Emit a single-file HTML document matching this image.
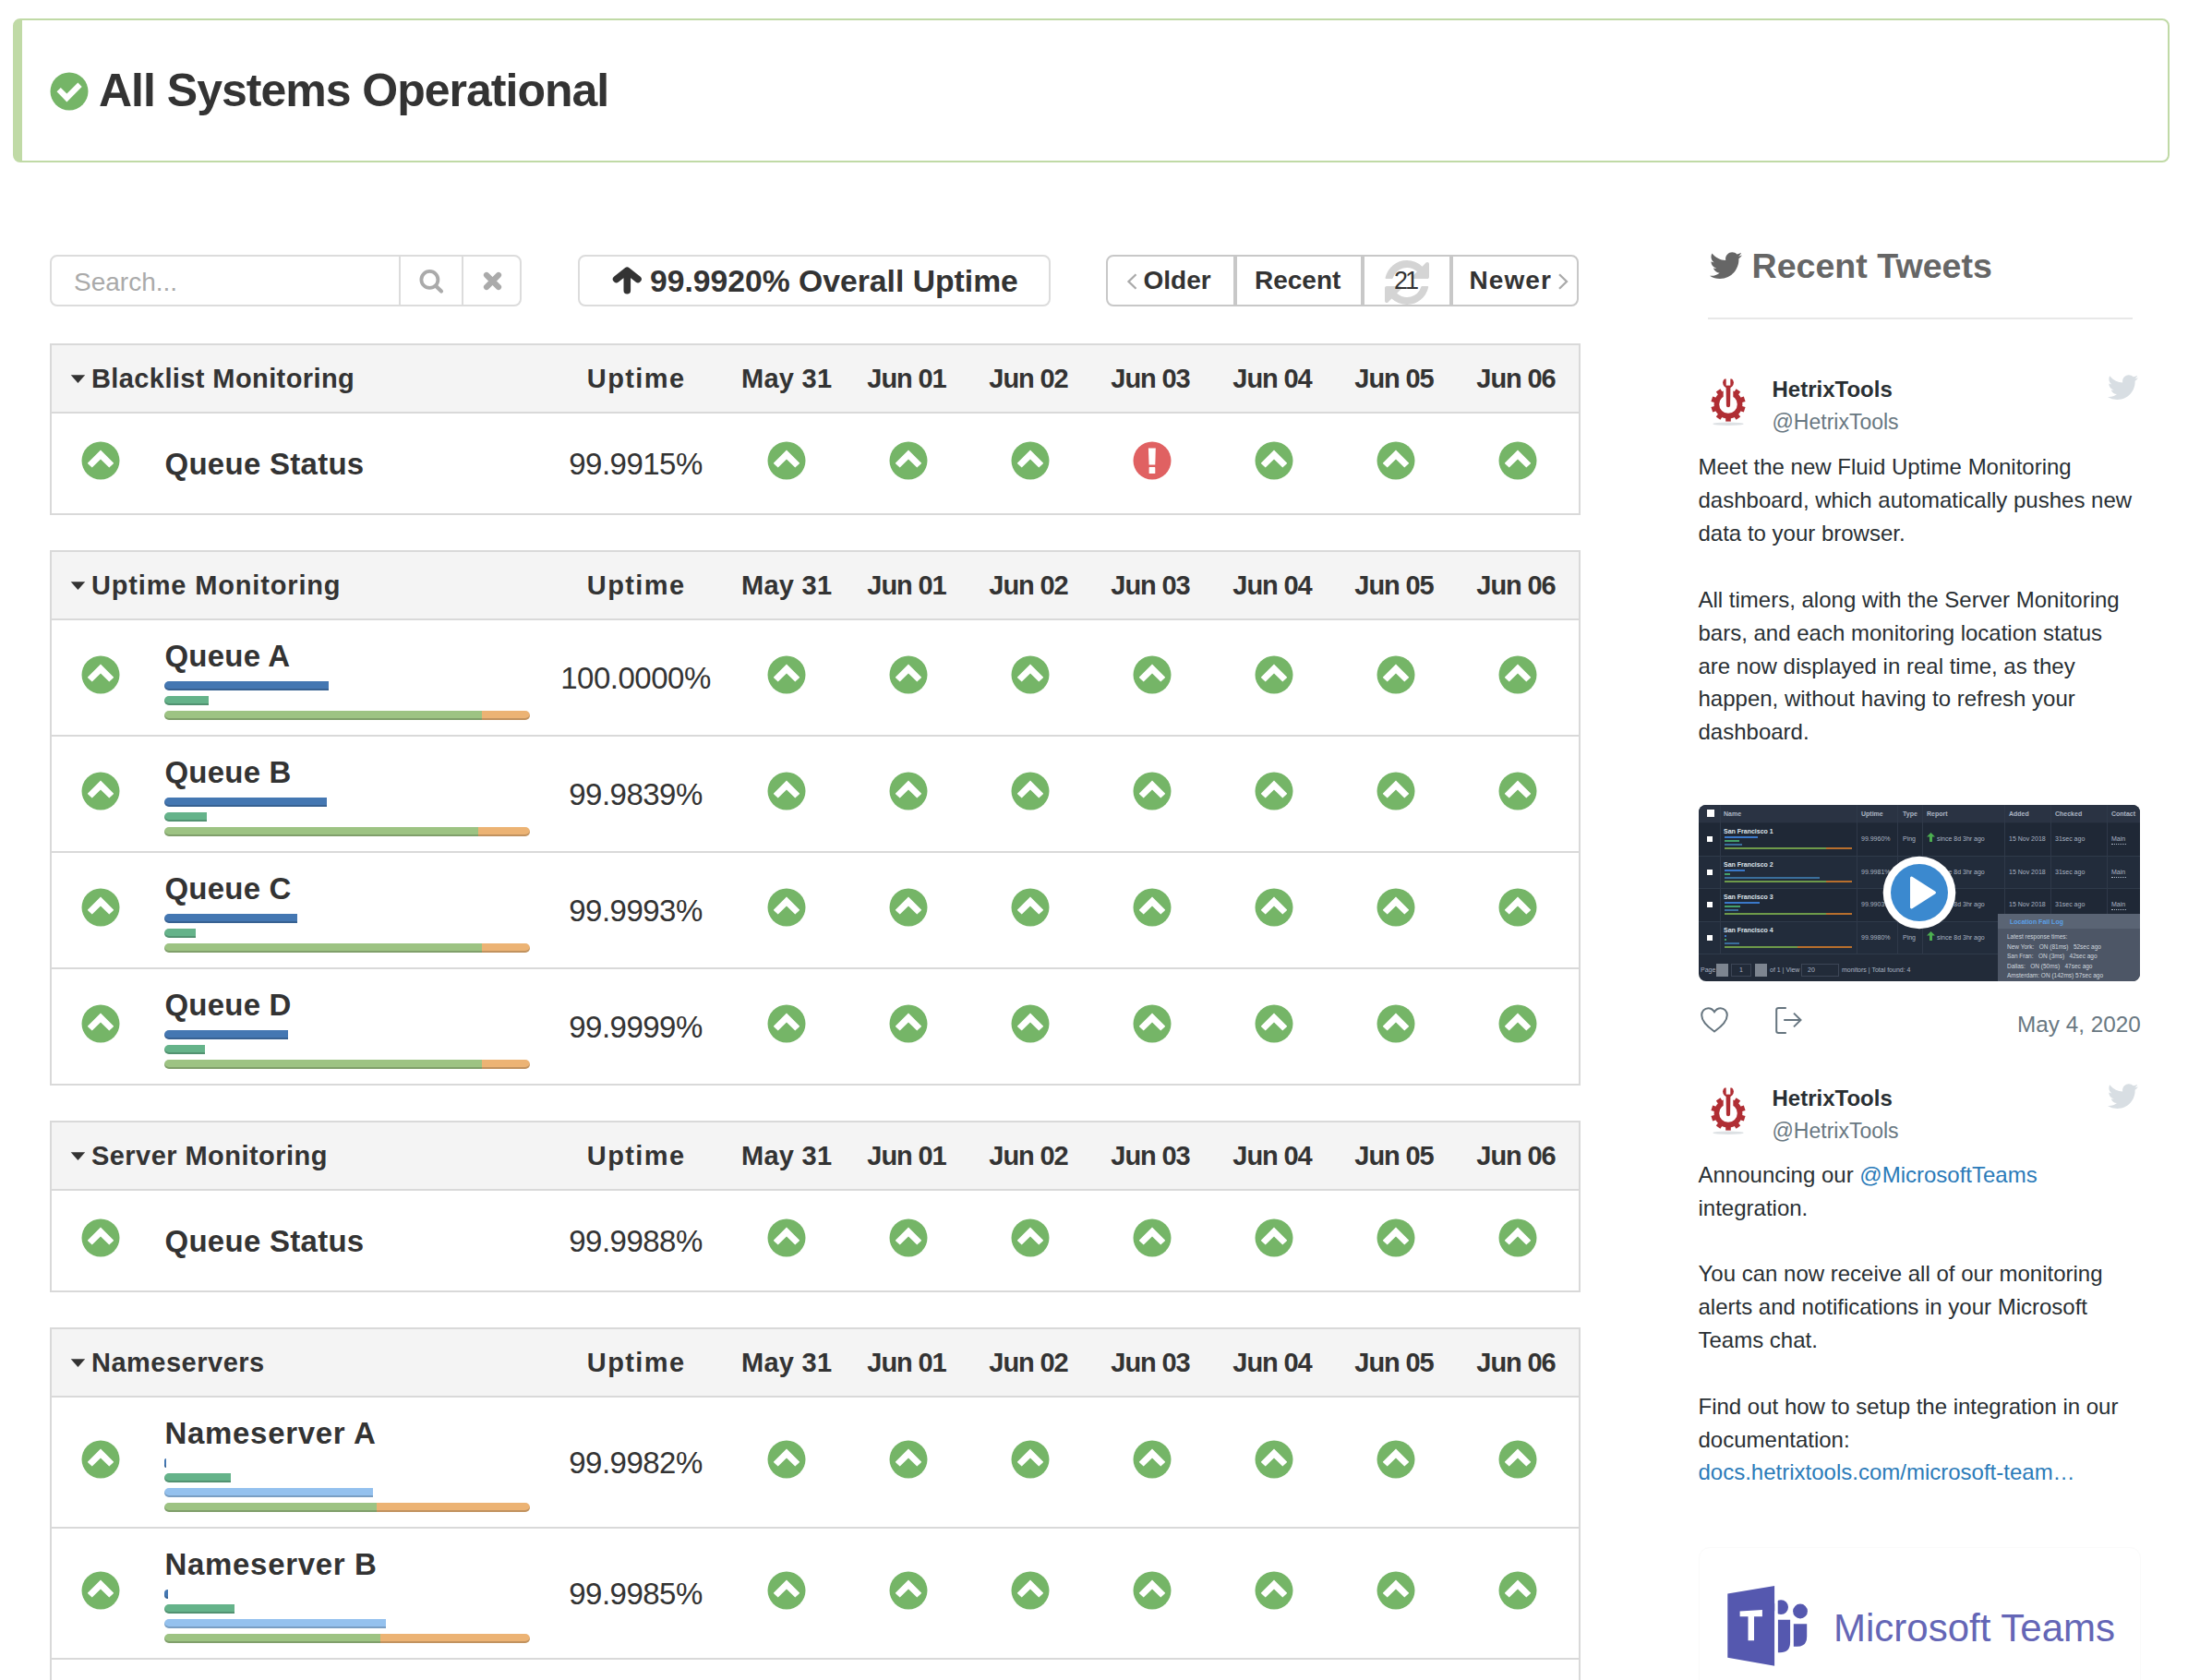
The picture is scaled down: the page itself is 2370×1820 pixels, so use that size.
<!DOCTYPE html><html><head><meta charset="utf-8"><title>Status</title><style>
html,body{margin:0;padding:0;background:#fff;}
body{width:2370px;height:1820px;position:relative;overflow:hidden;font-family:"Liberation Sans", sans-serif;}
.t{position:absolute;white-space:nowrap;}
.bar{position:absolute;height:10px;border-radius:5px 0 0 5px;box-shadow:inset 0 -2px 0 rgba(0,0,0,.18);}
</style></head><body>
<div style="position:absolute;left:14px;top:20px;width:2324px;height:152px;border:2px solid #c0daa6;border-left:10px solid #c0daa6;border-radius:8px;background:#fff;"></div>
<svg style="position:absolute;left:54px;top:78px" width="42" height="42" viewBox="-21 -21 42 42"><circle r="20.5" fill="#75b567"/><path d="M-13.5 0.2 L-9.2 -4 L-2.6 2.6 L9.4 -9.4 L13.7 -5.1 L-2.6 11.6 Z" fill="#fff"/></svg>
<div class="t" style="left:107.0px;top:73.2px;font-size:50px;line-height:50px;font-weight:700;color:#333;letter-spacing:-1px;">All Systems Operational</div>
<div style="position:absolute;left:54px;top:276px;width:507px;height:52px;border:2px solid #dcdcdc;border-radius:8px;background:#fff;"></div>
<div style="position:absolute;left:432px;top:278px;width:2px;height:52px;background:#dcdcdc;"></div>
<div style="position:absolute;left:500px;top:278px;width:2px;height:52px;background:#dcdcdc;"></div>
<div class="t" style="left:80.0px;top:292.3px;font-size:28px;line-height:28px;font-weight:400;color:#aaa;letter-spacing:0px;">Search...</div>
<svg style="position:absolute;left:450px;top:288px" width="34" height="34" viewBox="0 0 34 34"><circle cx="15.4" cy="14.9" r="9" fill="none" stroke="#aaa" stroke-width="3.8"/><line x1="22" y1="21.8" x2="28" y2="27.5" stroke="#aaa" stroke-width="4.2" stroke-linecap="round"/></svg>
<svg style="position:absolute;left:520px;top:291px" width="28" height="28" viewBox="0 0 28 28"><path d="M7 7 L20 20 M20 7 L7 20" stroke="#aaa" stroke-width="6.2" stroke-linecap="round"/></svg>
<div style="position:absolute;left:626px;top:276px;width:508px;height:52px;border:2px solid #dcdcdc;border-radius:8px;background:#fff;"></div>
<svg style="position:absolute;left:660px;top:286px" width="40" height="36" viewBox="0 0 40 36"><path d="M19.3 28.8 L19.3 9 M7.6 16.5 L19.3 7.2 L31 16.5" fill="none" stroke="#333" stroke-width="7.6" stroke-linecap="round" stroke-linejoin="round"/></svg>
<div class="t" style="left:704.0px;top:287.8px;font-size:33.7px;line-height:33.7px;font-weight:700;color:#333;letter-spacing:0px;">99.9920% Overall Uptime</div>
<div style="position:absolute;left:1198px;top:276px;width:508px;height:52px;border:2px solid #c8c8c8;border-radius:8px;background:#fff;"></div>
<div style="position:absolute;left:1336px;top:278px;width:4px;height:52px;background:#c8c8c8;"></div>
<div style="position:absolute;left:1474px;top:278px;width:4px;height:52px;background:#c8c8c8;"></div>
<div style="position:absolute;left:1570px;top:278px;width:4px;height:52px;background:#c8c8c8;"></div>
<svg style="position:absolute;left:1218px;top:294px" width="16" height="22" viewBox="0 0 16 22"><path d="M12.5 3.2 L4.5 11 L12.5 18.8" fill="none" stroke="#aaa" stroke-width="2.3"/></svg>
<div class="t" style="left:1238.5px;top:290.1px;font-size:28px;line-height:28px;font-weight:700;color:#333;letter-spacing:0px;">Older</div>
<div class="t" style="left:1359.0px;top:290.1px;font-size:28px;line-height:28px;font-weight:700;color:#333;letter-spacing:0px;">Recent</div>
<svg style="position:absolute;left:1500px;top:282px" width="48" height="48" viewBox="128 128 1536 1536"><path d="M1639 1056q0 5-1 7-64 268-268 434.5t-478 166.5q-146 0-282.5-55t-243.5-157l-129 129q-19 19-45 19t-45-19-19-45v-448q0-26 19-45t45-19h448q26 0 45 19t19 45-19 45l-137 137q71 66 161 102t187 36q134 0 250-65t186-179q11-17 53-117 8-23 30-23h192q13 0 22.5 9.5t9.5 22.5zm25-800v448q0 26-19 45t-45 19h-448q-26 0-45-19t-19-45 19-45l138-138q-148-137-349-137-134 0-250 65t-186 179q-11 17-53 117-8 23-30 23h-199q-13 0-22.5-9.5t-9.5-22.5v-7q65-268 270-434.5t480-166.5q146 0 284 55.5t245 156.5l130-129q19-19 45-19t45 19 19 45z" fill="#d4d4d4"/></svg>
<div class="t" style="left:1510.0px;top:290.9px;font-size:27px;line-height:27px;font-weight:400;color:#333;letter-spacing:-3px;">21</div>
<div class="t" style="left:1591.5px;top:290.1px;font-size:28px;line-height:28px;font-weight:700;color:#333;letter-spacing:1.1px;">Newer</div>
<svg style="position:absolute;left:1684px;top:294px" width="16" height="22" viewBox="0 0 16 22"><path d="M5 3.2 L13 11 L5 18.8" fill="none" stroke="#aaa" stroke-width="2.3"/></svg>
<div style="position:absolute;left:54px;top:372px;width:1654px;height:182px;border:2px solid #d9d9d9;background:#fff;"></div>
<div style="position:absolute;left:56px;top:374px;width:1654px;height:72px;background:#f4f4f4;"></div>
<div style="position:absolute;left:56px;top:446px;width:1654px;height:2px;background:#d9d9d9;"></div>
<svg style="position:absolute;left:76px;top:406px" width="17" height="10" viewBox="0 0 17 10"><path d="M0.7 0.2 L16.2 0.2 L8.45 9 Z" fill="#333"/></svg>
<div class="t" style="left:99.0px;top:395.5px;font-size:29px;line-height:29px;font-weight:700;color:#333;letter-spacing:0.4px;">Blacklist Monitoring</div>
<div class="t" style="left:539.2px;width:300px;text-align:center;top:395.5px;font-size:29px;line-height:29px;font-weight:700;color:#333;letter-spacing:1.4px;">Uptime</div>
<div class="t" style="left:702.2px;width:300px;text-align:center;top:395.5px;font-size:29px;line-height:29px;font-weight:700;color:#333;letter-spacing:0.28px;">May 31</div>
<div class="t" style="left:832.0px;width:300px;text-align:center;top:395.5px;font-size:29px;line-height:29px;font-weight:700;color:#333;letter-spacing:-1.1px;">Jun 01</div>
<div class="t" style="left:964.0px;width:300px;text-align:center;top:395.5px;font-size:29px;line-height:29px;font-weight:700;color:#333;letter-spacing:-1.1px;">Jun 02</div>
<div class="t" style="left:1096.0px;width:300px;text-align:center;top:395.5px;font-size:29px;line-height:29px;font-weight:700;color:#333;letter-spacing:-1.1px;">Jun 03</div>
<div class="t" style="left:1228.0px;width:300px;text-align:center;top:395.5px;font-size:29px;line-height:29px;font-weight:700;color:#333;letter-spacing:-1.1px;">Jun 04</div>
<div class="t" style="left:1360.0px;width:300px;text-align:center;top:395.5px;font-size:29px;line-height:29px;font-weight:700;color:#333;letter-spacing:-1.1px;">Jun 05</div>
<div class="t" style="left:1492.0px;width:300px;text-align:center;top:395.5px;font-size:29px;line-height:29px;font-weight:700;color:#333;letter-spacing:-1.1px;">Jun 06</div>
<svg style="position:absolute;left:88.40px;top:477.70px" width="42" height="42" viewBox="-21 -21 42 42"><circle r="20.5" fill="#75b567"/><path d="M0 -11.5 L14 2.6 Q14.2 2.9 13.9 3.2 L9.6 7.3 Q9.3 7.5 9 7.3 L0 -1.6 L-9 7.3 Q-9.3 7.5 -9.6 7.3 L-13.9 3.2 Q-14.2 2.9 -14 2.6 Z" fill="#fff"/></svg>
<div class="t" style="left:178.5px;top:485.8px;font-size:33px;line-height:33px;font-weight:700;color:#333;letter-spacing:0.27px;">Queue Status</div>
<div class="t" style="left:538.5px;width:300px;text-align:center;top:485.8px;font-size:33px;line-height:33px;font-weight:400;color:#333;letter-spacing:-0.5px;">99.9915%</div>
<svg style="position:absolute;left:831.25px;top:477.70px" width="42" height="42" viewBox="-21 -21 42 42"><circle r="20.5" fill="#75b567"/><path d="M0 -11.5 L14 2.6 Q14.2 2.9 13.9 3.2 L9.6 7.3 Q9.3 7.5 9 7.3 L0 -1.6 L-9 7.3 Q-9.3 7.5 -9.6 7.3 L-13.9 3.2 Q-14.2 2.9 -14 2.6 Z" fill="#fff"/></svg>
<svg style="position:absolute;left:963.25px;top:477.70px" width="42" height="42" viewBox="-21 -21 42 42"><circle r="20.5" fill="#75b567"/><path d="M0 -11.5 L14 2.6 Q14.2 2.9 13.9 3.2 L9.6 7.3 Q9.3 7.5 9 7.3 L0 -1.6 L-9 7.3 Q-9.3 7.5 -9.6 7.3 L-13.9 3.2 Q-14.2 2.9 -14 2.6 Z" fill="#fff"/></svg>
<svg style="position:absolute;left:1095.25px;top:477.70px" width="42" height="42" viewBox="-21 -21 42 42"><circle r="20.5" fill="#75b567"/><path d="M0 -11.5 L14 2.6 Q14.2 2.9 13.9 3.2 L9.6 7.3 Q9.3 7.5 9 7.3 L0 -1.6 L-9 7.3 Q-9.3 7.5 -9.6 7.3 L-13.9 3.2 Q-14.2 2.9 -14 2.6 Z" fill="#fff"/></svg>
<svg style="position:absolute;left:1227.25px;top:477.70px" width="42" height="42" viewBox="-21 -21 42 42"><circle r="20.5" fill="#e06162"/><path d="M-4.1 -13.6 L3.8 -13.6 L3.3 4.4 L-3.4 4.4 Z" fill="#fff"/><rect x="-3.4" y="7.1" width="6.7" height="7" rx="0.6" fill="#fff"/></svg>
<svg style="position:absolute;left:1359.25px;top:477.70px" width="42" height="42" viewBox="-21 -21 42 42"><circle r="20.5" fill="#75b567"/><path d="M0 -11.5 L14 2.6 Q14.2 2.9 13.9 3.2 L9.6 7.3 Q9.3 7.5 9 7.3 L0 -1.6 L-9 7.3 Q-9.3 7.5 -9.6 7.3 L-13.9 3.2 Q-14.2 2.9 -14 2.6 Z" fill="#fff"/></svg>
<svg style="position:absolute;left:1491.25px;top:477.70px" width="42" height="42" viewBox="-21 -21 42 42"><circle r="20.5" fill="#75b567"/><path d="M0 -11.5 L14 2.6 Q14.2 2.9 13.9 3.2 L9.6 7.3 Q9.3 7.5 9 7.3 L0 -1.6 L-9 7.3 Q-9.3 7.5 -9.6 7.3 L-13.9 3.2 Q-14.2 2.9 -14 2.6 Z" fill="#fff"/></svg>
<svg style="position:absolute;left:1623.25px;top:477.70px" width="42" height="42" viewBox="-21 -21 42 42"><circle r="20.5" fill="#75b567"/><path d="M0 -11.5 L14 2.6 Q14.2 2.9 13.9 3.2 L9.6 7.3 Q9.3 7.5 9 7.3 L0 -1.6 L-9 7.3 Q-9.3 7.5 -9.6 7.3 L-13.9 3.2 Q-14.2 2.9 -14 2.6 Z" fill="#fff"/></svg>
<div style="position:absolute;left:56px;top:556px;width:1654px;height:2px;background:#d9d9d9;"></div>
<div style="position:absolute;left:54px;top:596px;width:1654px;height:576px;border:2px solid #d9d9d9;background:#fff;"></div>
<div style="position:absolute;left:56px;top:598px;width:1654px;height:72px;background:#f4f4f4;"></div>
<div style="position:absolute;left:56px;top:670px;width:1654px;height:2px;background:#d9d9d9;"></div>
<svg style="position:absolute;left:76px;top:630px" width="17" height="10" viewBox="0 0 17 10"><path d="M0.7 0.2 L16.2 0.2 L8.45 9 Z" fill="#333"/></svg>
<div class="t" style="left:99.0px;top:619.5px;font-size:29px;line-height:29px;font-weight:700;color:#333;letter-spacing:0.84px;">Uptime Monitoring</div>
<div class="t" style="left:539.2px;width:300px;text-align:center;top:619.5px;font-size:29px;line-height:29px;font-weight:700;color:#333;letter-spacing:1.4px;">Uptime</div>
<div class="t" style="left:702.2px;width:300px;text-align:center;top:619.5px;font-size:29px;line-height:29px;font-weight:700;color:#333;letter-spacing:0.28px;">May 31</div>
<div class="t" style="left:832.0px;width:300px;text-align:center;top:619.5px;font-size:29px;line-height:29px;font-weight:700;color:#333;letter-spacing:-1.1px;">Jun 01</div>
<div class="t" style="left:964.0px;width:300px;text-align:center;top:619.5px;font-size:29px;line-height:29px;font-weight:700;color:#333;letter-spacing:-1.1px;">Jun 02</div>
<div class="t" style="left:1096.0px;width:300px;text-align:center;top:619.5px;font-size:29px;line-height:29px;font-weight:700;color:#333;letter-spacing:-1.1px;">Jun 03</div>
<div class="t" style="left:1228.0px;width:300px;text-align:center;top:619.5px;font-size:29px;line-height:29px;font-weight:700;color:#333;letter-spacing:-1.1px;">Jun 04</div>
<div class="t" style="left:1360.0px;width:300px;text-align:center;top:619.5px;font-size:29px;line-height:29px;font-weight:700;color:#333;letter-spacing:-1.1px;">Jun 05</div>
<div class="t" style="left:1492.0px;width:300px;text-align:center;top:619.5px;font-size:29px;line-height:29px;font-weight:700;color:#333;letter-spacing:-1.1px;">Jun 06</div>
<svg style="position:absolute;left:88.40px;top:709.70px" width="42" height="42" viewBox="-21 -21 42 42"><circle r="20.5" fill="#75b567"/><path d="M0 -11.5 L14 2.6 Q14.2 2.9 13.9 3.2 L9.6 7.3 Q9.3 7.5 9 7.3 L0 -1.6 L-9 7.3 Q-9.3 7.5 -9.6 7.3 L-13.9 3.2 Q-14.2 2.9 -14 2.6 Z" fill="#fff"/></svg>
<div class="t" style="left:178.5px;top:693.9px;font-size:33px;line-height:33px;font-weight:700;color:#333;letter-spacing:0.2px;">Queue A</div>
<div class="t" style="left:538.5px;width:300px;text-align:center;top:717.8px;font-size:33px;line-height:33px;font-weight:400;color:#333;letter-spacing:-0.5px;">100.0000%</div>
<svg style="position:absolute;left:831.25px;top:709.70px" width="42" height="42" viewBox="-21 -21 42 42"><circle r="20.5" fill="#75b567"/><path d="M0 -11.5 L14 2.6 Q14.2 2.9 13.9 3.2 L9.6 7.3 Q9.3 7.5 9 7.3 L0 -1.6 L-9 7.3 Q-9.3 7.5 -9.6 7.3 L-13.9 3.2 Q-14.2 2.9 -14 2.6 Z" fill="#fff"/></svg>
<svg style="position:absolute;left:963.25px;top:709.70px" width="42" height="42" viewBox="-21 -21 42 42"><circle r="20.5" fill="#75b567"/><path d="M0 -11.5 L14 2.6 Q14.2 2.9 13.9 3.2 L9.6 7.3 Q9.3 7.5 9 7.3 L0 -1.6 L-9 7.3 Q-9.3 7.5 -9.6 7.3 L-13.9 3.2 Q-14.2 2.9 -14 2.6 Z" fill="#fff"/></svg>
<svg style="position:absolute;left:1095.25px;top:709.70px" width="42" height="42" viewBox="-21 -21 42 42"><circle r="20.5" fill="#75b567"/><path d="M0 -11.5 L14 2.6 Q14.2 2.9 13.9 3.2 L9.6 7.3 Q9.3 7.5 9 7.3 L0 -1.6 L-9 7.3 Q-9.3 7.5 -9.6 7.3 L-13.9 3.2 Q-14.2 2.9 -14 2.6 Z" fill="#fff"/></svg>
<svg style="position:absolute;left:1227.25px;top:709.70px" width="42" height="42" viewBox="-21 -21 42 42"><circle r="20.5" fill="#75b567"/><path d="M0 -11.5 L14 2.6 Q14.2 2.9 13.9 3.2 L9.6 7.3 Q9.3 7.5 9 7.3 L0 -1.6 L-9 7.3 Q-9.3 7.5 -9.6 7.3 L-13.9 3.2 Q-14.2 2.9 -14 2.6 Z" fill="#fff"/></svg>
<svg style="position:absolute;left:1359.25px;top:709.70px" width="42" height="42" viewBox="-21 -21 42 42"><circle r="20.5" fill="#75b567"/><path d="M0 -11.5 L14 2.6 Q14.2 2.9 13.9 3.2 L9.6 7.3 Q9.3 7.5 9 7.3 L0 -1.6 L-9 7.3 Q-9.3 7.5 -9.6 7.3 L-13.9 3.2 Q-14.2 2.9 -14 2.6 Z" fill="#fff"/></svg>
<svg style="position:absolute;left:1491.25px;top:709.70px" width="42" height="42" viewBox="-21 -21 42 42"><circle r="20.5" fill="#75b567"/><path d="M0 -11.5 L14 2.6 Q14.2 2.9 13.9 3.2 L9.6 7.3 Q9.3 7.5 9 7.3 L0 -1.6 L-9 7.3 Q-9.3 7.5 -9.6 7.3 L-13.9 3.2 Q-14.2 2.9 -14 2.6 Z" fill="#fff"/></svg>
<svg style="position:absolute;left:1623.25px;top:709.70px" width="42" height="42" viewBox="-21 -21 42 42"><circle r="20.5" fill="#75b567"/><path d="M0 -11.5 L14 2.6 Q14.2 2.9 13.9 3.2 L9.6 7.3 Q9.3 7.5 9 7.3 L0 -1.6 L-9 7.3 Q-9.3 7.5 -9.6 7.3 L-13.9 3.2 Q-14.2 2.9 -14 2.6 Z" fill="#fff"/></svg>
<div class="bar" style="left:178px;top:738px;width:178px;background:#4477b2;"></div>
<div class="bar" style="left:178px;top:754px;width:48px;background:#65b38a;"></div>
<div class="bar" style="left:178px;top:770px;width:344px;background:#9dc383;"></div>
<div class="bar" style="left:522px;top:770px;width:52px;background:#ecb374;border-radius:0 5px 5px 0;"></div>
<div style="position:absolute;left:56px;top:796px;width:1654px;height:2px;background:#d9d9d9;"></div>
<svg style="position:absolute;left:88.40px;top:835.70px" width="42" height="42" viewBox="-21 -21 42 42"><circle r="20.5" fill="#75b567"/><path d="M0 -11.5 L14 2.6 Q14.2 2.9 13.9 3.2 L9.6 7.3 Q9.3 7.5 9 7.3 L0 -1.6 L-9 7.3 Q-9.3 7.5 -9.6 7.3 L-13.9 3.2 Q-14.2 2.9 -14 2.6 Z" fill="#fff"/></svg>
<div class="t" style="left:178.5px;top:819.9px;font-size:33px;line-height:33px;font-weight:700;color:#333;letter-spacing:0.2px;">Queue B</div>
<div class="t" style="left:538.5px;width:300px;text-align:center;top:843.8px;font-size:33px;line-height:33px;font-weight:400;color:#333;letter-spacing:-0.5px;">99.9839%</div>
<svg style="position:absolute;left:831.25px;top:835.70px" width="42" height="42" viewBox="-21 -21 42 42"><circle r="20.5" fill="#75b567"/><path d="M0 -11.5 L14 2.6 Q14.2 2.9 13.9 3.2 L9.6 7.3 Q9.3 7.5 9 7.3 L0 -1.6 L-9 7.3 Q-9.3 7.5 -9.6 7.3 L-13.9 3.2 Q-14.2 2.9 -14 2.6 Z" fill="#fff"/></svg>
<svg style="position:absolute;left:963.25px;top:835.70px" width="42" height="42" viewBox="-21 -21 42 42"><circle r="20.5" fill="#75b567"/><path d="M0 -11.5 L14 2.6 Q14.2 2.9 13.9 3.2 L9.6 7.3 Q9.3 7.5 9 7.3 L0 -1.6 L-9 7.3 Q-9.3 7.5 -9.6 7.3 L-13.9 3.2 Q-14.2 2.9 -14 2.6 Z" fill="#fff"/></svg>
<svg style="position:absolute;left:1095.25px;top:835.70px" width="42" height="42" viewBox="-21 -21 42 42"><circle r="20.5" fill="#75b567"/><path d="M0 -11.5 L14 2.6 Q14.2 2.9 13.9 3.2 L9.6 7.3 Q9.3 7.5 9 7.3 L0 -1.6 L-9 7.3 Q-9.3 7.5 -9.6 7.3 L-13.9 3.2 Q-14.2 2.9 -14 2.6 Z" fill="#fff"/></svg>
<svg style="position:absolute;left:1227.25px;top:835.70px" width="42" height="42" viewBox="-21 -21 42 42"><circle r="20.5" fill="#75b567"/><path d="M0 -11.5 L14 2.6 Q14.2 2.9 13.9 3.2 L9.6 7.3 Q9.3 7.5 9 7.3 L0 -1.6 L-9 7.3 Q-9.3 7.5 -9.6 7.3 L-13.9 3.2 Q-14.2 2.9 -14 2.6 Z" fill="#fff"/></svg>
<svg style="position:absolute;left:1359.25px;top:835.70px" width="42" height="42" viewBox="-21 -21 42 42"><circle r="20.5" fill="#75b567"/><path d="M0 -11.5 L14 2.6 Q14.2 2.9 13.9 3.2 L9.6 7.3 Q9.3 7.5 9 7.3 L0 -1.6 L-9 7.3 Q-9.3 7.5 -9.6 7.3 L-13.9 3.2 Q-14.2 2.9 -14 2.6 Z" fill="#fff"/></svg>
<svg style="position:absolute;left:1491.25px;top:835.70px" width="42" height="42" viewBox="-21 -21 42 42"><circle r="20.5" fill="#75b567"/><path d="M0 -11.5 L14 2.6 Q14.2 2.9 13.9 3.2 L9.6 7.3 Q9.3 7.5 9 7.3 L0 -1.6 L-9 7.3 Q-9.3 7.5 -9.6 7.3 L-13.9 3.2 Q-14.2 2.9 -14 2.6 Z" fill="#fff"/></svg>
<svg style="position:absolute;left:1623.25px;top:835.70px" width="42" height="42" viewBox="-21 -21 42 42"><circle r="20.5" fill="#75b567"/><path d="M0 -11.5 L14 2.6 Q14.2 2.9 13.9 3.2 L9.6 7.3 Q9.3 7.5 9 7.3 L0 -1.6 L-9 7.3 Q-9.3 7.5 -9.6 7.3 L-13.9 3.2 Q-14.2 2.9 -14 2.6 Z" fill="#fff"/></svg>
<div class="bar" style="left:178px;top:864px;width:176px;background:#4477b2;"></div>
<div class="bar" style="left:178px;top:880px;width:46px;background:#65b38a;"></div>
<div class="bar" style="left:178px;top:896px;width:340px;background:#9dc383;"></div>
<div class="bar" style="left:518px;top:896px;width:56px;background:#ecb374;border-radius:0 5px 5px 0;"></div>
<div style="position:absolute;left:56px;top:922px;width:1654px;height:2px;background:#d9d9d9;"></div>
<svg style="position:absolute;left:88.40px;top:961.70px" width="42" height="42" viewBox="-21 -21 42 42"><circle r="20.5" fill="#75b567"/><path d="M0 -11.5 L14 2.6 Q14.2 2.9 13.9 3.2 L9.6 7.3 Q9.3 7.5 9 7.3 L0 -1.6 L-9 7.3 Q-9.3 7.5 -9.6 7.3 L-13.9 3.2 Q-14.2 2.9 -14 2.6 Z" fill="#fff"/></svg>
<div class="t" style="left:178.5px;top:945.9px;font-size:33px;line-height:33px;font-weight:700;color:#333;letter-spacing:0.2px;">Queue C</div>
<div class="t" style="left:538.5px;width:300px;text-align:center;top:969.8px;font-size:33px;line-height:33px;font-weight:400;color:#333;letter-spacing:-0.5px;">99.9993%</div>
<svg style="position:absolute;left:831.25px;top:961.70px" width="42" height="42" viewBox="-21 -21 42 42"><circle r="20.5" fill="#75b567"/><path d="M0 -11.5 L14 2.6 Q14.2 2.9 13.9 3.2 L9.6 7.3 Q9.3 7.5 9 7.3 L0 -1.6 L-9 7.3 Q-9.3 7.5 -9.6 7.3 L-13.9 3.2 Q-14.2 2.9 -14 2.6 Z" fill="#fff"/></svg>
<svg style="position:absolute;left:963.25px;top:961.70px" width="42" height="42" viewBox="-21 -21 42 42"><circle r="20.5" fill="#75b567"/><path d="M0 -11.5 L14 2.6 Q14.2 2.9 13.9 3.2 L9.6 7.3 Q9.3 7.5 9 7.3 L0 -1.6 L-9 7.3 Q-9.3 7.5 -9.6 7.3 L-13.9 3.2 Q-14.2 2.9 -14 2.6 Z" fill="#fff"/></svg>
<svg style="position:absolute;left:1095.25px;top:961.70px" width="42" height="42" viewBox="-21 -21 42 42"><circle r="20.5" fill="#75b567"/><path d="M0 -11.5 L14 2.6 Q14.2 2.9 13.9 3.2 L9.6 7.3 Q9.3 7.5 9 7.3 L0 -1.6 L-9 7.3 Q-9.3 7.5 -9.6 7.3 L-13.9 3.2 Q-14.2 2.9 -14 2.6 Z" fill="#fff"/></svg>
<svg style="position:absolute;left:1227.25px;top:961.70px" width="42" height="42" viewBox="-21 -21 42 42"><circle r="20.5" fill="#75b567"/><path d="M0 -11.5 L14 2.6 Q14.2 2.9 13.9 3.2 L9.6 7.3 Q9.3 7.5 9 7.3 L0 -1.6 L-9 7.3 Q-9.3 7.5 -9.6 7.3 L-13.9 3.2 Q-14.2 2.9 -14 2.6 Z" fill="#fff"/></svg>
<svg style="position:absolute;left:1359.25px;top:961.70px" width="42" height="42" viewBox="-21 -21 42 42"><circle r="20.5" fill="#75b567"/><path d="M0 -11.5 L14 2.6 Q14.2 2.9 13.9 3.2 L9.6 7.3 Q9.3 7.5 9 7.3 L0 -1.6 L-9 7.3 Q-9.3 7.5 -9.6 7.3 L-13.9 3.2 Q-14.2 2.9 -14 2.6 Z" fill="#fff"/></svg>
<svg style="position:absolute;left:1491.25px;top:961.70px" width="42" height="42" viewBox="-21 -21 42 42"><circle r="20.5" fill="#75b567"/><path d="M0 -11.5 L14 2.6 Q14.2 2.9 13.9 3.2 L9.6 7.3 Q9.3 7.5 9 7.3 L0 -1.6 L-9 7.3 Q-9.3 7.5 -9.6 7.3 L-13.9 3.2 Q-14.2 2.9 -14 2.6 Z" fill="#fff"/></svg>
<svg style="position:absolute;left:1623.25px;top:961.70px" width="42" height="42" viewBox="-21 -21 42 42"><circle r="20.5" fill="#75b567"/><path d="M0 -11.5 L14 2.6 Q14.2 2.9 13.9 3.2 L9.6 7.3 Q9.3 7.5 9 7.3 L0 -1.6 L-9 7.3 Q-9.3 7.5 -9.6 7.3 L-13.9 3.2 Q-14.2 2.9 -14 2.6 Z" fill="#fff"/></svg>
<div class="bar" style="left:178px;top:990px;width:144px;background:#4477b2;"></div>
<div class="bar" style="left:178px;top:1006px;width:34px;background:#65b38a;"></div>
<div class="bar" style="left:178px;top:1022px;width:344px;background:#9dc383;"></div>
<div class="bar" style="left:522px;top:1022px;width:52px;background:#ecb374;border-radius:0 5px 5px 0;"></div>
<div style="position:absolute;left:56px;top:1048px;width:1654px;height:2px;background:#d9d9d9;"></div>
<svg style="position:absolute;left:88.40px;top:1087.70px" width="42" height="42" viewBox="-21 -21 42 42"><circle r="20.5" fill="#75b567"/><path d="M0 -11.5 L14 2.6 Q14.2 2.9 13.9 3.2 L9.6 7.3 Q9.3 7.5 9 7.3 L0 -1.6 L-9 7.3 Q-9.3 7.5 -9.6 7.3 L-13.9 3.2 Q-14.2 2.9 -14 2.6 Z" fill="#fff"/></svg>
<div class="t" style="left:178.5px;top:1071.9px;font-size:33px;line-height:33px;font-weight:700;color:#333;letter-spacing:0.2px;">Queue D</div>
<div class="t" style="left:538.5px;width:300px;text-align:center;top:1095.8px;font-size:33px;line-height:33px;font-weight:400;color:#333;letter-spacing:-0.5px;">99.9999%</div>
<svg style="position:absolute;left:831.25px;top:1087.70px" width="42" height="42" viewBox="-21 -21 42 42"><circle r="20.5" fill="#75b567"/><path d="M0 -11.5 L14 2.6 Q14.2 2.9 13.9 3.2 L9.6 7.3 Q9.3 7.5 9 7.3 L0 -1.6 L-9 7.3 Q-9.3 7.5 -9.6 7.3 L-13.9 3.2 Q-14.2 2.9 -14 2.6 Z" fill="#fff"/></svg>
<svg style="position:absolute;left:963.25px;top:1087.70px" width="42" height="42" viewBox="-21 -21 42 42"><circle r="20.5" fill="#75b567"/><path d="M0 -11.5 L14 2.6 Q14.2 2.9 13.9 3.2 L9.6 7.3 Q9.3 7.5 9 7.3 L0 -1.6 L-9 7.3 Q-9.3 7.5 -9.6 7.3 L-13.9 3.2 Q-14.2 2.9 -14 2.6 Z" fill="#fff"/></svg>
<svg style="position:absolute;left:1095.25px;top:1087.70px" width="42" height="42" viewBox="-21 -21 42 42"><circle r="20.5" fill="#75b567"/><path d="M0 -11.5 L14 2.6 Q14.2 2.9 13.9 3.2 L9.6 7.3 Q9.3 7.5 9 7.3 L0 -1.6 L-9 7.3 Q-9.3 7.5 -9.6 7.3 L-13.9 3.2 Q-14.2 2.9 -14 2.6 Z" fill="#fff"/></svg>
<svg style="position:absolute;left:1227.25px;top:1087.70px" width="42" height="42" viewBox="-21 -21 42 42"><circle r="20.5" fill="#75b567"/><path d="M0 -11.5 L14 2.6 Q14.2 2.9 13.9 3.2 L9.6 7.3 Q9.3 7.5 9 7.3 L0 -1.6 L-9 7.3 Q-9.3 7.5 -9.6 7.3 L-13.9 3.2 Q-14.2 2.9 -14 2.6 Z" fill="#fff"/></svg>
<svg style="position:absolute;left:1359.25px;top:1087.70px" width="42" height="42" viewBox="-21 -21 42 42"><circle r="20.5" fill="#75b567"/><path d="M0 -11.5 L14 2.6 Q14.2 2.9 13.9 3.2 L9.6 7.3 Q9.3 7.5 9 7.3 L0 -1.6 L-9 7.3 Q-9.3 7.5 -9.6 7.3 L-13.9 3.2 Q-14.2 2.9 -14 2.6 Z" fill="#fff"/></svg>
<svg style="position:absolute;left:1491.25px;top:1087.70px" width="42" height="42" viewBox="-21 -21 42 42"><circle r="20.5" fill="#75b567"/><path d="M0 -11.5 L14 2.6 Q14.2 2.9 13.9 3.2 L9.6 7.3 Q9.3 7.5 9 7.3 L0 -1.6 L-9 7.3 Q-9.3 7.5 -9.6 7.3 L-13.9 3.2 Q-14.2 2.9 -14 2.6 Z" fill="#fff"/></svg>
<svg style="position:absolute;left:1623.25px;top:1087.70px" width="42" height="42" viewBox="-21 -21 42 42"><circle r="20.5" fill="#75b567"/><path d="M0 -11.5 L14 2.6 Q14.2 2.9 13.9 3.2 L9.6 7.3 Q9.3 7.5 9 7.3 L0 -1.6 L-9 7.3 Q-9.3 7.5 -9.6 7.3 L-13.9 3.2 Q-14.2 2.9 -14 2.6 Z" fill="#fff"/></svg>
<div class="bar" style="left:178px;top:1116px;width:134px;background:#4477b2;"></div>
<div class="bar" style="left:178px;top:1132px;width:44px;background:#65b38a;"></div>
<div class="bar" style="left:178px;top:1148px;width:344px;background:#9dc383;"></div>
<div class="bar" style="left:522px;top:1148px;width:52px;background:#ecb374;border-radius:0 5px 5px 0;"></div>
<div style="position:absolute;left:54px;top:1214px;width:1654px;height:182px;border:2px solid #d9d9d9;background:#fff;"></div>
<div style="position:absolute;left:56px;top:1216px;width:1654px;height:72px;background:#f4f4f4;"></div>
<div style="position:absolute;left:56px;top:1288px;width:1654px;height:2px;background:#d9d9d9;"></div>
<svg style="position:absolute;left:76px;top:1248px" width="17" height="10" viewBox="0 0 17 10"><path d="M0.7 0.2 L16.2 0.2 L8.45 9 Z" fill="#333"/></svg>
<div class="t" style="left:99.0px;top:1237.5px;font-size:29px;line-height:29px;font-weight:700;color:#333;letter-spacing:0.45px;">Server Monitoring</div>
<div class="t" style="left:539.2px;width:300px;text-align:center;top:1237.5px;font-size:29px;line-height:29px;font-weight:700;color:#333;letter-spacing:1.4px;">Uptime</div>
<div class="t" style="left:702.2px;width:300px;text-align:center;top:1237.5px;font-size:29px;line-height:29px;font-weight:700;color:#333;letter-spacing:0.28px;">May 31</div>
<div class="t" style="left:832.0px;width:300px;text-align:center;top:1237.5px;font-size:29px;line-height:29px;font-weight:700;color:#333;letter-spacing:-1.1px;">Jun 01</div>
<div class="t" style="left:964.0px;width:300px;text-align:center;top:1237.5px;font-size:29px;line-height:29px;font-weight:700;color:#333;letter-spacing:-1.1px;">Jun 02</div>
<div class="t" style="left:1096.0px;width:300px;text-align:center;top:1237.5px;font-size:29px;line-height:29px;font-weight:700;color:#333;letter-spacing:-1.1px;">Jun 03</div>
<div class="t" style="left:1228.0px;width:300px;text-align:center;top:1237.5px;font-size:29px;line-height:29px;font-weight:700;color:#333;letter-spacing:-1.1px;">Jun 04</div>
<div class="t" style="left:1360.0px;width:300px;text-align:center;top:1237.5px;font-size:29px;line-height:29px;font-weight:700;color:#333;letter-spacing:-1.1px;">Jun 05</div>
<div class="t" style="left:1492.0px;width:300px;text-align:center;top:1237.5px;font-size:29px;line-height:29px;font-weight:700;color:#333;letter-spacing:-1.1px;">Jun 06</div>
<svg style="position:absolute;left:88.40px;top:1319.70px" width="42" height="42" viewBox="-21 -21 42 42"><circle r="20.5" fill="#75b567"/><path d="M0 -11.5 L14 2.6 Q14.2 2.9 13.9 3.2 L9.6 7.3 Q9.3 7.5 9 7.3 L0 -1.6 L-9 7.3 Q-9.3 7.5 -9.6 7.3 L-13.9 3.2 Q-14.2 2.9 -14 2.6 Z" fill="#fff"/></svg>
<div class="t" style="left:178.5px;top:1327.8px;font-size:33px;line-height:33px;font-weight:700;color:#333;letter-spacing:0.27px;">Queue Status</div>
<div class="t" style="left:538.5px;width:300px;text-align:center;top:1327.8px;font-size:33px;line-height:33px;font-weight:400;color:#333;letter-spacing:-0.5px;">99.9988%</div>
<svg style="position:absolute;left:831.25px;top:1319.70px" width="42" height="42" viewBox="-21 -21 42 42"><circle r="20.5" fill="#75b567"/><path d="M0 -11.5 L14 2.6 Q14.2 2.9 13.9 3.2 L9.6 7.3 Q9.3 7.5 9 7.3 L0 -1.6 L-9 7.3 Q-9.3 7.5 -9.6 7.3 L-13.9 3.2 Q-14.2 2.9 -14 2.6 Z" fill="#fff"/></svg>
<svg style="position:absolute;left:963.25px;top:1319.70px" width="42" height="42" viewBox="-21 -21 42 42"><circle r="20.5" fill="#75b567"/><path d="M0 -11.5 L14 2.6 Q14.2 2.9 13.9 3.2 L9.6 7.3 Q9.3 7.5 9 7.3 L0 -1.6 L-9 7.3 Q-9.3 7.5 -9.6 7.3 L-13.9 3.2 Q-14.2 2.9 -14 2.6 Z" fill="#fff"/></svg>
<svg style="position:absolute;left:1095.25px;top:1319.70px" width="42" height="42" viewBox="-21 -21 42 42"><circle r="20.5" fill="#75b567"/><path d="M0 -11.5 L14 2.6 Q14.2 2.9 13.9 3.2 L9.6 7.3 Q9.3 7.5 9 7.3 L0 -1.6 L-9 7.3 Q-9.3 7.5 -9.6 7.3 L-13.9 3.2 Q-14.2 2.9 -14 2.6 Z" fill="#fff"/></svg>
<svg style="position:absolute;left:1227.25px;top:1319.70px" width="42" height="42" viewBox="-21 -21 42 42"><circle r="20.5" fill="#75b567"/><path d="M0 -11.5 L14 2.6 Q14.2 2.9 13.9 3.2 L9.6 7.3 Q9.3 7.5 9 7.3 L0 -1.6 L-9 7.3 Q-9.3 7.5 -9.6 7.3 L-13.9 3.2 Q-14.2 2.9 -14 2.6 Z" fill="#fff"/></svg>
<svg style="position:absolute;left:1359.25px;top:1319.70px" width="42" height="42" viewBox="-21 -21 42 42"><circle r="20.5" fill="#75b567"/><path d="M0 -11.5 L14 2.6 Q14.2 2.9 13.9 3.2 L9.6 7.3 Q9.3 7.5 9 7.3 L0 -1.6 L-9 7.3 Q-9.3 7.5 -9.6 7.3 L-13.9 3.2 Q-14.2 2.9 -14 2.6 Z" fill="#fff"/></svg>
<svg style="position:absolute;left:1491.25px;top:1319.70px" width="42" height="42" viewBox="-21 -21 42 42"><circle r="20.5" fill="#75b567"/><path d="M0 -11.5 L14 2.6 Q14.2 2.9 13.9 3.2 L9.6 7.3 Q9.3 7.5 9 7.3 L0 -1.6 L-9 7.3 Q-9.3 7.5 -9.6 7.3 L-13.9 3.2 Q-14.2 2.9 -14 2.6 Z" fill="#fff"/></svg>
<svg style="position:absolute;left:1623.25px;top:1319.70px" width="42" height="42" viewBox="-21 -21 42 42"><circle r="20.5" fill="#75b567"/><path d="M0 -11.5 L14 2.6 Q14.2 2.9 13.9 3.2 L9.6 7.3 Q9.3 7.5 9 7.3 L0 -1.6 L-9 7.3 Q-9.3 7.5 -9.6 7.3 L-13.9 3.2 Q-14.2 2.9 -14 2.6 Z" fill="#fff"/></svg>
<div style="position:absolute;left:54px;top:1438px;width:1654px;height:560px;border:2px solid #d9d9d9;border-bottom:none;background:#fff;"></div>
<div style="position:absolute;left:56px;top:1440px;width:1654px;height:72px;background:#f4f4f4;"></div>
<div style="position:absolute;left:56px;top:1512px;width:1654px;height:2px;background:#d9d9d9;"></div>
<svg style="position:absolute;left:76px;top:1472px" width="17" height="10" viewBox="0 0 17 10"><path d="M0.7 0.2 L16.2 0.2 L8.45 9 Z" fill="#333"/></svg>
<div class="t" style="left:99.0px;top:1461.5px;font-size:29px;line-height:29px;font-weight:700;color:#333;letter-spacing:0.5px;">Nameservers</div>
<div class="t" style="left:539.2px;width:300px;text-align:center;top:1461.5px;font-size:29px;line-height:29px;font-weight:700;color:#333;letter-spacing:1.4px;">Uptime</div>
<div class="t" style="left:702.2px;width:300px;text-align:center;top:1461.5px;font-size:29px;line-height:29px;font-weight:700;color:#333;letter-spacing:0.28px;">May 31</div>
<div class="t" style="left:832.0px;width:300px;text-align:center;top:1461.5px;font-size:29px;line-height:29px;font-weight:700;color:#333;letter-spacing:-1.1px;">Jun 01</div>
<div class="t" style="left:964.0px;width:300px;text-align:center;top:1461.5px;font-size:29px;line-height:29px;font-weight:700;color:#333;letter-spacing:-1.1px;">Jun 02</div>
<div class="t" style="left:1096.0px;width:300px;text-align:center;top:1461.5px;font-size:29px;line-height:29px;font-weight:700;color:#333;letter-spacing:-1.1px;">Jun 03</div>
<div class="t" style="left:1228.0px;width:300px;text-align:center;top:1461.5px;font-size:29px;line-height:29px;font-weight:700;color:#333;letter-spacing:-1.1px;">Jun 04</div>
<div class="t" style="left:1360.0px;width:300px;text-align:center;top:1461.5px;font-size:29px;line-height:29px;font-weight:700;color:#333;letter-spacing:-1.1px;">Jun 05</div>
<div class="t" style="left:1492.0px;width:300px;text-align:center;top:1461.5px;font-size:29px;line-height:29px;font-weight:700;color:#333;letter-spacing:-1.1px;">Jun 06</div>
<svg style="position:absolute;left:88.40px;top:1559.70px" width="42" height="42" viewBox="-21 -21 42 42"><circle r="20.5" fill="#75b567"/><path d="M0 -11.5 L14 2.6 Q14.2 2.9 13.9 3.2 L9.6 7.3 Q9.3 7.5 9 7.3 L0 -1.6 L-9 7.3 Q-9.3 7.5 -9.6 7.3 L-13.9 3.2 Q-14.2 2.9 -14 2.6 Z" fill="#fff"/></svg>
<div class="t" style="left:178.5px;top:1535.9px;font-size:33px;line-height:33px;font-weight:700;color:#333;letter-spacing:0.68px;">Nameserver A</div>
<div class="t" style="left:538.5px;width:300px;text-align:center;top:1567.8px;font-size:33px;line-height:33px;font-weight:400;color:#333;letter-spacing:-0.5px;">99.9982%</div>
<svg style="position:absolute;left:831.25px;top:1559.70px" width="42" height="42" viewBox="-21 -21 42 42"><circle r="20.5" fill="#75b567"/><path d="M0 -11.5 L14 2.6 Q14.2 2.9 13.9 3.2 L9.6 7.3 Q9.3 7.5 9 7.3 L0 -1.6 L-9 7.3 Q-9.3 7.5 -9.6 7.3 L-13.9 3.2 Q-14.2 2.9 -14 2.6 Z" fill="#fff"/></svg>
<svg style="position:absolute;left:963.25px;top:1559.70px" width="42" height="42" viewBox="-21 -21 42 42"><circle r="20.5" fill="#75b567"/><path d="M0 -11.5 L14 2.6 Q14.2 2.9 13.9 3.2 L9.6 7.3 Q9.3 7.5 9 7.3 L0 -1.6 L-9 7.3 Q-9.3 7.5 -9.6 7.3 L-13.9 3.2 Q-14.2 2.9 -14 2.6 Z" fill="#fff"/></svg>
<svg style="position:absolute;left:1095.25px;top:1559.70px" width="42" height="42" viewBox="-21 -21 42 42"><circle r="20.5" fill="#75b567"/><path d="M0 -11.5 L14 2.6 Q14.2 2.9 13.9 3.2 L9.6 7.3 Q9.3 7.5 9 7.3 L0 -1.6 L-9 7.3 Q-9.3 7.5 -9.6 7.3 L-13.9 3.2 Q-14.2 2.9 -14 2.6 Z" fill="#fff"/></svg>
<svg style="position:absolute;left:1227.25px;top:1559.70px" width="42" height="42" viewBox="-21 -21 42 42"><circle r="20.5" fill="#75b567"/><path d="M0 -11.5 L14 2.6 Q14.2 2.9 13.9 3.2 L9.6 7.3 Q9.3 7.5 9 7.3 L0 -1.6 L-9 7.3 Q-9.3 7.5 -9.6 7.3 L-13.9 3.2 Q-14.2 2.9 -14 2.6 Z" fill="#fff"/></svg>
<svg style="position:absolute;left:1359.25px;top:1559.70px" width="42" height="42" viewBox="-21 -21 42 42"><circle r="20.5" fill="#75b567"/><path d="M0 -11.5 L14 2.6 Q14.2 2.9 13.9 3.2 L9.6 7.3 Q9.3 7.5 9 7.3 L0 -1.6 L-9 7.3 Q-9.3 7.5 -9.6 7.3 L-13.9 3.2 Q-14.2 2.9 -14 2.6 Z" fill="#fff"/></svg>
<svg style="position:absolute;left:1491.25px;top:1559.70px" width="42" height="42" viewBox="-21 -21 42 42"><circle r="20.5" fill="#75b567"/><path d="M0 -11.5 L14 2.6 Q14.2 2.9 13.9 3.2 L9.6 7.3 Q9.3 7.5 9 7.3 L0 -1.6 L-9 7.3 Q-9.3 7.5 -9.6 7.3 L-13.9 3.2 Q-14.2 2.9 -14 2.6 Z" fill="#fff"/></svg>
<svg style="position:absolute;left:1623.25px;top:1559.70px" width="42" height="42" viewBox="-21 -21 42 42"><circle r="20.5" fill="#75b567"/><path d="M0 -11.5 L14 2.6 Q14.2 2.9 13.9 3.2 L9.6 7.3 Q9.3 7.5 9 7.3 L0 -1.6 L-9 7.3 Q-9.3 7.5 -9.6 7.3 L-13.9 3.2 Q-14.2 2.9 -14 2.6 Z" fill="#fff"/></svg>
<div class="bar" style="left:178px;top:1580px;width:2px;background:#4477b2;"></div>
<div class="bar" style="left:178px;top:1596px;width:72px;background:#65b38a;"></div>
<div class="bar" style="left:178px;top:1612px;width:226px;background:#94c1ee;"></div>
<div class="bar" style="left:178px;top:1628px;width:230px;background:#9dc383;"></div>
<div class="bar" style="left:408px;top:1628px;width:166px;background:#ecb374;border-radius:0 5px 5px 0;"></div>
<div style="position:absolute;left:56px;top:1654px;width:1654px;height:2px;background:#d9d9d9;"></div>
<svg style="position:absolute;left:88.40px;top:1701.70px" width="42" height="42" viewBox="-21 -21 42 42"><circle r="20.5" fill="#75b567"/><path d="M0 -11.5 L14 2.6 Q14.2 2.9 13.9 3.2 L9.6 7.3 Q9.3 7.5 9 7.3 L0 -1.6 L-9 7.3 Q-9.3 7.5 -9.6 7.3 L-13.9 3.2 Q-14.2 2.9 -14 2.6 Z" fill="#fff"/></svg>
<div class="t" style="left:178.5px;top:1677.9px;font-size:33px;line-height:33px;font-weight:700;color:#333;letter-spacing:0.68px;">Nameserver B</div>
<div class="t" style="left:538.5px;width:300px;text-align:center;top:1709.8px;font-size:33px;line-height:33px;font-weight:400;color:#333;letter-spacing:-0.5px;">99.9985%</div>
<svg style="position:absolute;left:831.25px;top:1701.70px" width="42" height="42" viewBox="-21 -21 42 42"><circle r="20.5" fill="#75b567"/><path d="M0 -11.5 L14 2.6 Q14.2 2.9 13.9 3.2 L9.6 7.3 Q9.3 7.5 9 7.3 L0 -1.6 L-9 7.3 Q-9.3 7.5 -9.6 7.3 L-13.9 3.2 Q-14.2 2.9 -14 2.6 Z" fill="#fff"/></svg>
<svg style="position:absolute;left:963.25px;top:1701.70px" width="42" height="42" viewBox="-21 -21 42 42"><circle r="20.5" fill="#75b567"/><path d="M0 -11.5 L14 2.6 Q14.2 2.9 13.9 3.2 L9.6 7.3 Q9.3 7.5 9 7.3 L0 -1.6 L-9 7.3 Q-9.3 7.5 -9.6 7.3 L-13.9 3.2 Q-14.2 2.9 -14 2.6 Z" fill="#fff"/></svg>
<svg style="position:absolute;left:1095.25px;top:1701.70px" width="42" height="42" viewBox="-21 -21 42 42"><circle r="20.5" fill="#75b567"/><path d="M0 -11.5 L14 2.6 Q14.2 2.9 13.9 3.2 L9.6 7.3 Q9.3 7.5 9 7.3 L0 -1.6 L-9 7.3 Q-9.3 7.5 -9.6 7.3 L-13.9 3.2 Q-14.2 2.9 -14 2.6 Z" fill="#fff"/></svg>
<svg style="position:absolute;left:1227.25px;top:1701.70px" width="42" height="42" viewBox="-21 -21 42 42"><circle r="20.5" fill="#75b567"/><path d="M0 -11.5 L14 2.6 Q14.2 2.9 13.9 3.2 L9.6 7.3 Q9.3 7.5 9 7.3 L0 -1.6 L-9 7.3 Q-9.3 7.5 -9.6 7.3 L-13.9 3.2 Q-14.2 2.9 -14 2.6 Z" fill="#fff"/></svg>
<svg style="position:absolute;left:1359.25px;top:1701.70px" width="42" height="42" viewBox="-21 -21 42 42"><circle r="20.5" fill="#75b567"/><path d="M0 -11.5 L14 2.6 Q14.2 2.9 13.9 3.2 L9.6 7.3 Q9.3 7.5 9 7.3 L0 -1.6 L-9 7.3 Q-9.3 7.5 -9.6 7.3 L-13.9 3.2 Q-14.2 2.9 -14 2.6 Z" fill="#fff"/></svg>
<svg style="position:absolute;left:1491.25px;top:1701.70px" width="42" height="42" viewBox="-21 -21 42 42"><circle r="20.5" fill="#75b567"/><path d="M0 -11.5 L14 2.6 Q14.2 2.9 13.9 3.2 L9.6 7.3 Q9.3 7.5 9 7.3 L0 -1.6 L-9 7.3 Q-9.3 7.5 -9.6 7.3 L-13.9 3.2 Q-14.2 2.9 -14 2.6 Z" fill="#fff"/></svg>
<svg style="position:absolute;left:1623.25px;top:1701.70px" width="42" height="42" viewBox="-21 -21 42 42"><circle r="20.5" fill="#75b567"/><path d="M0 -11.5 L14 2.6 Q14.2 2.9 13.9 3.2 L9.6 7.3 Q9.3 7.5 9 7.3 L0 -1.6 L-9 7.3 Q-9.3 7.5 -9.6 7.3 L-13.9 3.2 Q-14.2 2.9 -14 2.6 Z" fill="#fff"/></svg>
<div class="bar" style="left:178px;top:1722px;width:4px;background:#4477b2;"></div>
<div class="bar" style="left:178px;top:1738px;width:76px;background:#65b38a;"></div>
<div class="bar" style="left:178px;top:1754px;width:240px;background:#94c1ee;"></div>
<div class="bar" style="left:178px;top:1770px;width:234px;background:#9dc383;"></div>
<div class="bar" style="left:412px;top:1770px;width:162px;background:#ecb374;border-radius:0 5px 5px 0;"></div>
<div style="position:absolute;left:56px;top:1796px;width:1654px;height:2px;background:#d9d9d9;"></div>
<svg style="position:absolute;left:1852px;top:273px" width="35" height="29" viewBox="0 46 512 419" preserveAspectRatio="none"><path d="M459.37 151.716c.325 4.548.325 9.097.325 13.645 0 138.72-105.583 298.558-298.558 298.558-59.452 0-114.68-17.219-161.137-47.106 8.447.974 16.568 1.299 25.34 1.299 49.055 0 94.213-16.568 130.274-44.832-46.132-.975-84.792-31.188-98.112-72.772 6.498.974 12.995 1.624 19.818 1.624 9.421 0 18.843-1.3 27.614-3.573-48.081-9.747-84.143-51.98-84.143-102.985v-1.299c13.969 7.797 30.214 12.67 47.431 13.319-28.264-18.843-46.781-51.005-46.781-87.391 0-19.492 5.197-37.36 14.294-52.954 51.655 63.675 129.3 105.258 216.365 109.807-1.624-7.797-2.599-15.918-2.599-24.04 0-57.828 46.782-104.934 104.934-104.934 30.213 0 57.502 12.67 76.67 33.137 23.715-4.548 46.456-13.32 66.599-25.34-7.798 24.366-24.366 44.833-46.132 57.827 21.117-2.273 41.584-8.122 60.426-16.243-14.292 20.791-32.161 39.308-52.628 54.253z" fill="#666"/></svg>
<div class="t" style="left:1897.5px;top:270.2px;font-size:37.6px;line-height:37.6px;font-weight:700;color:#666;letter-spacing:0px;">Recent Tweets</div>
<div style="position:absolute;left:1850px;top:344px;width:460px;height:2px;background:#e8e8e8;"></div>
<svg style="position:absolute;left:1846.9px;top:407.5px" width="50" height="56" viewBox="-25 -30 50 56">
<ellipse cx="0" cy="21.3" rx="16.7" ry="1.7" fill="#dde1e4"/>
<g fill="#b02e34"><circle r="12.6" fill="none" stroke="#b02e34" stroke-width="5.6"/><rect x="-2.8" y="-18.6" width="5.6" height="5.5" transform="rotate(36)"/><rect x="-2.8" y="-18.6" width="5.6" height="5.5" transform="rotate(72)"/><rect x="-2.8" y="-18.6" width="5.6" height="5.5" transform="rotate(108)"/><rect x="-2.8" y="-18.6" width="5.6" height="5.5" transform="rotate(144)"/><rect x="-2.8" y="-18.6" width="5.6" height="5.5" transform="rotate(180)"/><rect x="-2.8" y="-18.6" width="5.6" height="5.5" transform="rotate(216)"/><rect x="-2.8" y="-18.6" width="5.6" height="5.5" transform="rotate(252)"/><rect x="-2.8" y="-18.6" width="5.6" height="5.5" transform="rotate(288)"/><rect x="-2.8" y="-18.6" width="5.6" height="5.5" transform="rotate(324)"/></g>
<rect x="-5.3" y="-22" width="10.6" height="14" fill="#fff"/>
<clipPath id="hc437"><rect x="-8" y="-27.5" width="16" height="12"/></clipPath>
<circle cx="0" cy="-23.4" r="5.9" fill="#b02e34" clip-path="url(#hc437)"/>
<rect x="-2.3" y="-30" width="4.6" height="9.6" fill="#fff"/>
<path d="M-2.4 -19 L2.4 -19 L2.1 1.2 A2.1 2.1 0 0 1 -2.1 1.2 Z" fill="#b02e34"/>
</svg>
<svg style="position:absolute;left:2283px;top:406px" width="33" height="27" viewBox="0 46 512 419" preserveAspectRatio="none"><path d="M459.37 151.716c.325 4.548.325 9.097.325 13.645 0 138.72-105.583 298.558-298.558 298.558-59.452 0-114.68-17.219-161.137-47.106 8.447.974 16.568 1.299 25.34 1.299 49.055 0 94.213-16.568 130.274-44.832-46.132-.975-84.792-31.188-98.112-72.772 6.498.974 12.995 1.624 19.818 1.624 9.421 0 18.843-1.3 27.614-3.573-48.081-9.747-84.143-51.98-84.143-102.985v-1.299c13.969 7.797 30.214 12.67 47.431 13.319-28.264-18.843-46.781-51.005-46.781-87.391 0-19.492 5.197-37.36 14.294-52.954 51.655 63.675 129.3 105.258 216.365 109.807-1.624-7.797-2.599-15.918-2.599-24.04 0-57.828 46.782-104.934 104.934-104.934 30.213 0 57.502 12.67 76.67 33.137 23.715-4.548 46.456-13.32 66.599-25.34-7.798 24.366-24.366 44.833-46.132 57.827 21.117-2.273 41.584-8.122 60.426-16.243-14.292 20.791-32.161 39.308-52.628 54.253z" fill="#d8dee3"/></svg>
<div class="t" style="left:1919.5px;top:409.5px;font-size:24px;line-height:24px;font-weight:700;color:#292f33;letter-spacing:0px;">HetrixTools</div>
<div class="t" style="left:1919.5px;top:446.0px;font-size:23px;line-height:23px;font-weight:400;color:#697882;letter-spacing:0px;">@HetrixTools</div>
<div class="t" style="left:1839.5px;top:494.4px;font-size:24px;line-height:24px;font-weight:400;color:#292f33;letter-spacing:0px;">Meet the new Fluid Uptime Monitoring</div>
<div class="t" style="left:1839.5px;top:530.2px;font-size:24px;line-height:24px;font-weight:400;color:#292f33;letter-spacing:0px;">dashboard, which automatically pushes new</div>
<div class="t" style="left:1839.5px;top:566.1px;font-size:24px;line-height:24px;font-weight:400;color:#292f33;letter-spacing:0px;">data to your browser.</div>
<div class="t" style="left:1839.5px;top:637.8px;font-size:24px;line-height:24px;font-weight:400;color:#292f33;letter-spacing:0px;">All timers, along with the Server Monitoring</div>
<div class="t" style="left:1839.5px;top:673.6px;font-size:24px;line-height:24px;font-weight:400;color:#292f33;letter-spacing:0px;">bars, and each monitoring location status</div>
<div class="t" style="left:1839.5px;top:709.5px;font-size:24px;line-height:24px;font-weight:400;color:#292f33;letter-spacing:0px;">are now displayed in real time, as they</div>
<div class="t" style="left:1839.5px;top:745.3px;font-size:24px;line-height:24px;font-weight:400;color:#292f33;letter-spacing:0px;">happen, without having to refresh your</div>
<div class="t" style="left:1839.5px;top:781.2px;font-size:24px;line-height:24px;font-weight:400;color:#292f33;letter-spacing:0px;">dashboard.</div>
<div style="position:absolute;left:1840px;top:872px;width:478px;height:191px;border-radius:8px;overflow:hidden;background:#222b39;">
<div style="position:absolute;left:0;top:0;width:478px;height:19px;background:#2a3343;"></div>
<div class="t" style="left:27px;top:5px;font-size:7px;line-height:9px;color:#aab4c2;font-weight:700">Name</div>
<div class="t" style="left:176px;top:5px;font-size:7px;line-height:9px;color:#aab4c2;font-weight:700">Uptime</div>
<div class="t" style="left:221px;top:5px;font-size:7px;line-height:9px;color:#aab4c2;font-weight:700">Type</div>
<div class="t" style="left:247px;top:5px;font-size:7px;line-height:9px;color:#aab4c2;font-weight:700">Report</div>
<div class="t" style="left:336px;top:5px;font-size:7px;line-height:9px;color:#aab4c2;font-weight:700">Added</div>
<div class="t" style="left:386px;top:5px;font-size:7px;line-height:9px;color:#aab4c2;font-weight:700">Checked</div>
<div class="t" style="left:447px;top:5px;font-size:7px;line-height:9px;color:#aab4c2;font-weight:700">Contact</div>
<div style="position:absolute;left:0;top:20.0px;width:478px;height:34.5px;background:#1f2836;border-bottom:1px solid #2f3a4a"></div>
<div style="position:absolute;left:9px;top:34.0px;width:6px;height:6px;background:#fff"></div>
<div class="t" style="left:27px;top:24.0px;font-size:7px;line-height:9px;color:#dde3ea;font-weight:700">San Francisco 1</div>
<div style="position:absolute;left:28px;top:34.0px;width:36px;height:2px;background:#3a78c9"></div>
<div style="position:absolute;left:28px;top:38.0px;width:16px;height:2px;background:#45a06a"></div>
<div style="position:absolute;left:28px;top:42.0px;width:19px;height:2px;background:#3a6e9b"></div>
<div style="position:absolute;left:28px;top:46.0px;width:138px;height:2px;background:linear-gradient(90deg,#6e9a4a 0,#6e9a4a 80%,#b86f2d 80%)"></div>
<div class="t" style="left:176px;top:32.0px;font-size:7px;line-height:9px;color:#aab4c2">99.9960%</div>
<div class="t" style="left:221px;top:32.0px;font-size:7px;line-height:9px;color:#aab4c2">Ping</div>
<div class="t" style="left:258px;top:32.0px;font-size:7px;line-height:9px;color:#aab4c2">since 8d 3hr ago</div>
<div class="t" style="left:336px;top:32.0px;font-size:7px;line-height:9px;color:#aab4c2">15 Nov 2018</div>
<div class="t" style="left:386px;top:32.0px;font-size:7px;line-height:9px;color:#aab4c2">31sec ago</div>
<div class="t" style="left:447px;top:32.0px;font-size:7px;line-height:9px;color:#aab4c2">Main</div>
<div style="position:absolute;left:0;top:55.5px;width:478px;height:34.5px;background:#222c3b;border-bottom:1px solid #2f3a4a"></div>
<div style="position:absolute;left:9px;top:69.5px;width:6px;height:6px;background:#fff"></div>
<div class="t" style="left:27px;top:59.5px;font-size:7px;line-height:9px;color:#dde3ea;font-weight:700">San Francisco 2</div>
<div style="position:absolute;left:28px;top:69.5px;width:22px;height:2px;background:#3a78c9"></div>
<div style="position:absolute;left:28px;top:73.5px;width:6px;height:2px;background:#45a06a"></div>
<div style="position:absolute;left:28px;top:77.5px;width:103px;height:2px;background:#3a6e9b"></div>
<div style="position:absolute;left:28px;top:81.5px;width:138px;height:2px;background:linear-gradient(90deg,#6e9a4a 0,#6e9a4a 80%,#b86f2d 80%)"></div>
<div class="t" style="left:176px;top:67.5px;font-size:7px;line-height:9px;color:#aab4c2">99.9981%</div>
<div class="t" style="left:221px;top:67.5px;font-size:7px;line-height:9px;color:#aab4c2">Ping</div>
<div class="t" style="left:258px;top:67.5px;font-size:7px;line-height:9px;color:#aab4c2">since 8d 3hr ago</div>
<div class="t" style="left:336px;top:67.5px;font-size:7px;line-height:9px;color:#aab4c2">15 Nov 2018</div>
<div class="t" style="left:386px;top:67.5px;font-size:7px;line-height:9px;color:#aab4c2">31sec ago</div>
<div class="t" style="left:447px;top:67.5px;font-size:7px;line-height:9px;color:#aab4c2">Main</div>
<div style="position:absolute;left:0;top:91.0px;width:478px;height:34.5px;background:#1f2836;border-bottom:1px solid #2f3a4a"></div>
<div style="position:absolute;left:9px;top:105.0px;width:6px;height:6px;background:#fff"></div>
<div class="t" style="left:27px;top:95.0px;font-size:7px;line-height:9px;color:#dde3ea;font-weight:700">San Francisco 3</div>
<div style="position:absolute;left:28px;top:105.0px;width:38px;height:2px;background:#3a78c9"></div>
<div style="position:absolute;left:28px;top:109.0px;width:17px;height:2px;background:#45a06a"></div>
<div style="position:absolute;left:28px;top:113.0px;width:15px;height:2px;background:#3a6e9b"></div>
<div style="position:absolute;left:28px;top:117.0px;width:138px;height:2px;background:linear-gradient(90deg,#6e9a4a 0,#6e9a4a 80%,#b86f2d 80%)"></div>
<div class="t" style="left:176px;top:103.0px;font-size:7px;line-height:9px;color:#aab4c2">99.9903%</div>
<div class="t" style="left:221px;top:103.0px;font-size:7px;line-height:9px;color:#aab4c2">Ping</div>
<div class="t" style="left:258px;top:103.0px;font-size:7px;line-height:9px;color:#aab4c2">since 8d 3hr ago</div>
<div class="t" style="left:336px;top:103.0px;font-size:7px;line-height:9px;color:#aab4c2">15 Nov 2018</div>
<div class="t" style="left:386px;top:103.0px;font-size:7px;line-height:9px;color:#aab4c2">31sec ago</div>
<div class="t" style="left:447px;top:103.0px;font-size:7px;line-height:9px;color:#aab4c2">Main</div>
<div style="position:absolute;left:0;top:126.5px;width:478px;height:34.5px;background:#222c3b;border-bottom:1px solid #2f3a4a"></div>
<div style="position:absolute;left:9px;top:140.5px;width:6px;height:6px;background:#fff"></div>
<div class="t" style="left:27px;top:130.5px;font-size:7px;line-height:9px;color:#dde3ea;font-weight:700">San Francisco 4</div>
<div style="position:absolute;left:28px;top:140.5px;width:2px;height:2px;background:#3a78c9"></div>
<div style="position:absolute;left:28px;top:144.5px;width:2px;height:2px;background:#45a06a"></div>
<div style="position:absolute;left:28px;top:148.5px;width:16px;height:2px;background:#3a6e9b"></div>
<div style="position:absolute;left:28px;top:152.5px;width:138px;height:2px;background:linear-gradient(90deg,#6e9a4a 0,#6e9a4a 57%,#b86f2d 57%)"></div>
<div class="t" style="left:176px;top:138.5px;font-size:7px;line-height:9px;color:#aab4c2">99.9980%</div>
<div class="t" style="left:221px;top:138.5px;font-size:7px;line-height:9px;color:#aab4c2">Ping</div>
<div class="t" style="left:258px;top:138.5px;font-size:7px;line-height:9px;color:#aab4c2">since 8d 3hr ago</div>
<div class="t" style="left:336px;top:138.5px;font-size:7px;line-height:9px;color:#aab4c2">15 Nov 2018</div>
<div class="t" style="left:386px;top:138.5px;font-size:7px;line-height:9px;color:#aab4c2">31sec ago</div>
<div class="t" style="left:447px;top:138.5px;font-size:7px;line-height:9px;color:#aab4c2">Main</div>
<div style="position:absolute;left:22.8px;top:0;width:1px;height:162px;background:#2f3949"></div>
<div style="position:absolute;left:171.4px;top:0;width:1px;height:162px;background:#2f3949"></div>
<div style="position:absolute;left:214.8px;top:0;width:1px;height:162px;background:#2f3949"></div>
<div style="position:absolute;left:242.2px;top:0;width:1px;height:162px;background:#2f3949"></div>
<div style="position:absolute;left:331.4px;top:0;width:1px;height:162px;background:#2f3949"></div>
<div style="position:absolute;left:380.5px;top:0;width:1px;height:162px;background:#2f3949"></div>
<div style="position:absolute;left:442.2px;top:0;width:1px;height:162px;background:#2f3949"></div>
<div style="position:absolute;left:9px;top:5px;width:8px;height:8px;background:#fff"></div>
<svg style="position:absolute;left:247px;top:30.0px" width="9" height="10" viewBox="0 0 9 10"><path d="M4.5 0 L9 4.5 L6 4.5 L6 10 L3 10 L3 4.5 L0 4.5 Z" fill="#4caf50"/></svg>
<div style="position:absolute;left:447px;top:42.0px;width:16px;height:0;border-top:1px dotted #aab4c2"></div>
<svg style="position:absolute;left:247px;top:65.5px" width="9" height="10" viewBox="0 0 9 10"><path d="M4.5 0 L9 4.5 L6 4.5 L6 10 L3 10 L3 4.5 L0 4.5 Z" fill="#4caf50"/></svg>
<div style="position:absolute;left:447px;top:77.5px;width:16px;height:0;border-top:1px dotted #aab4c2"></div>
<svg style="position:absolute;left:247px;top:101.0px" width="9" height="10" viewBox="0 0 9 10"><path d="M4.5 0 L9 4.5 L6 4.5 L6 10 L3 10 L3 4.5 L0 4.5 Z" fill="#4caf50"/></svg>
<div style="position:absolute;left:447px;top:113.0px;width:16px;height:0;border-top:1px dotted #aab4c2"></div>
<svg style="position:absolute;left:247px;top:136.5px" width="9" height="10" viewBox="0 0 9 10"><path d="M4.5 0 L9 4.5 L6 4.5 L6 10 L3 10 L3 4.5 L0 4.5 Z" fill="#4caf50"/></svg>
<div style="position:absolute;left:447px;top:148.5px;width:16px;height:0;border-top:1px dotted #aab4c2"></div>
<div style="position:absolute;left:19px;top:172px;width:13px;height:14px;background:#7d8590"></div>
<div style="position:absolute;left:35px;top:172px;width:22px;height:14px;border:1px solid #3d4656;box-sizing:border-box"></div>
<div style="position:absolute;left:61px;top:172px;width:13px;height:14px;background:#7d8590"></div>
<div style="position:absolute;left:111px;top:172px;width:41px;height:14px;border:1px solid #3d4656;box-sizing:border-box"></div>
<div class="t" style="left:2px;top:174px;font-size:7px;line-height:9px;color:#aab4c2">Page</div>
<div class="t" style="left:77px;top:174px;font-size:7px;line-height:9px;color:#aab4c2">of 1 | View</div>
<div class="t" style="left:155px;top:174px;font-size:7px;line-height:9px;color:#aab4c2">monitors | Total found: 4</div>
<div class="t" style="left:44px;top:174px;font-size:7px;line-height:9px;color:#aab4c2">1</div>
<div class="t" style="left:118px;top:174px;font-size:7px;line-height:9px;color:#aab4c2">20</div>
<div style="position:absolute;left:324px;top:118px;width:154px;height:73px;background:#4d5666;"></div>
<div style="position:absolute;left:324px;top:118px;width:154px;height:16px;background:#5a6474;"></div>
<div class="t" style="left:337px;top:122px;font-size:7px;line-height:9px;color:#5aa0e6;font-weight:700">Location Fail Log</div>
<div class="t" style="left:334px;top:138px;font-size:6.5px;line-height:10.5px;color:#d0d6de">Latest response times:<br>New York: &nbsp; ON (81ms) &nbsp; 52sec ago<br>San Fran: &nbsp; ON (3ms) &nbsp; 42sec ago<br>Dallas: &nbsp; ON (50ms) &nbsp; 47sec ago<br>Amsterdam: ON (142ms) 57sec ago</div>
</div>
<svg style="position:absolute;left:2039px;top:927px" width="80" height="80" viewBox="-40 -40 80 80"><circle r="39.3" fill="#fff"/><circle r="31" fill="#3b89cf"/><path d="M-8.5 -16 L16.5 0 L-8.5 16 Z" fill="#fff" stroke="#fff" stroke-width="3" stroke-linejoin="round"/></svg>
<svg style="position:absolute;left:1840px;top:1089px" width="34" height="32" viewBox="0 0 34 32"><path d="M17 7.2 C15 4 12.5 3.2 10.3 3.2 C6.3 3.2 3.2 6.5 3.2 10.8 C3.2 17.5 10.5 24 17 28.5 C23.5 24 30.8 17.5 30.8 10.8 C30.8 6.5 27.7 3.2 23.7 3.2 C21.5 3.2 19 4 17 7.2 Z" fill="none" stroke="#66757f" stroke-width="2"/></svg>
<svg style="position:absolute;left:1920px;top:1088px" width="36" height="34" viewBox="0 0 36 34"><path d="M14.8 4 L6.5 4 Q4.2 4 4.2 6.3 L4.2 28.7 Q4.2 31 6.5 31 L14.8 31" fill="none" stroke="#66757f" stroke-width="2"/><path d="M12.2 17 L30.5 17 M23 9.6 L30.5 17 L23 24.4" fill="none" stroke="#66757f" stroke-width="2"/></svg>
<div class="t" style="left:2185.0px;top:1097.6px;font-size:24.3px;line-height:24.3px;font-weight:400;color:#697882;letter-spacing:0px;">May 4, 2020</div>
<svg style="position:absolute;left:1846.9px;top:1175.8px" width="50" height="56" viewBox="-25 -30 50 56">
<ellipse cx="0" cy="21.3" rx="16.7" ry="1.7" fill="#dde1e4"/>
<g fill="#b02e34"><circle r="12.6" fill="none" stroke="#b02e34" stroke-width="5.6"/><rect x="-2.8" y="-18.6" width="5.6" height="5.5" transform="rotate(36)"/><rect x="-2.8" y="-18.6" width="5.6" height="5.5" transform="rotate(72)"/><rect x="-2.8" y="-18.6" width="5.6" height="5.5" transform="rotate(108)"/><rect x="-2.8" y="-18.6" width="5.6" height="5.5" transform="rotate(144)"/><rect x="-2.8" y="-18.6" width="5.6" height="5.5" transform="rotate(180)"/><rect x="-2.8" y="-18.6" width="5.6" height="5.5" transform="rotate(216)"/><rect x="-2.8" y="-18.6" width="5.6" height="5.5" transform="rotate(252)"/><rect x="-2.8" y="-18.6" width="5.6" height="5.5" transform="rotate(288)"/><rect x="-2.8" y="-18.6" width="5.6" height="5.5" transform="rotate(324)"/></g>
<rect x="-5.3" y="-22" width="10.6" height="14" fill="#fff"/>
<clipPath id="hc1205"><rect x="-8" y="-27.5" width="16" height="12"/></clipPath>
<circle cx="0" cy="-23.4" r="5.9" fill="#b02e34" clip-path="url(#hc1205)"/>
<rect x="-2.3" y="-30" width="4.6" height="9.6" fill="#fff"/>
<path d="M-2.4 -19 L2.4 -19 L2.1 1.2 A2.1 2.1 0 0 1 -2.1 1.2 Z" fill="#b02e34"/>
</svg>
<svg style="position:absolute;left:2283px;top:1174.3px" width="33" height="27" viewBox="0 46 512 419" preserveAspectRatio="none"><path d="M459.37 151.716c.325 4.548.325 9.097.325 13.645 0 138.72-105.583 298.558-298.558 298.558-59.452 0-114.68-17.219-161.137-47.106 8.447.974 16.568 1.299 25.34 1.299 49.055 0 94.213-16.568 130.274-44.832-46.132-.975-84.792-31.188-98.112-72.772 6.498.974 12.995 1.624 19.818 1.624 9.421 0 18.843-1.3 27.614-3.573-48.081-9.747-84.143-51.98-84.143-102.985v-1.299c13.969 7.797 30.214 12.67 47.431 13.319-28.264-18.843-46.781-51.005-46.781-87.391 0-19.492 5.197-37.36 14.294-52.954 51.655 63.675 129.3 105.258 216.365 109.807-1.624-7.797-2.599-15.918-2.599-24.04 0-57.828 46.782-104.934 104.934-104.934 30.213 0 57.502 12.67 76.67 33.137 23.715-4.548 46.456-13.32 66.599-25.34-7.798 24.366-24.366 44.833-46.132 57.827 21.117-2.273 41.584-8.122 60.426-16.243-14.292 20.791-32.161 39.308-52.628 54.253z" fill="#d8dee3"/></svg>
<div class="t" style="left:1919.5px;top:1177.8px;font-size:24px;line-height:24px;font-weight:700;color:#292f33;letter-spacing:0px;">HetrixTools</div>
<div class="t" style="left:1919.5px;top:1214.3px;font-size:23px;line-height:23px;font-weight:400;color:#697882;letter-spacing:0px;">@HetrixTools</div>
<div class="t" style="left:1839.5px;top:1260.7px;font-size:24px;line-height:24px;font-weight:400;color:#292f33;letter-spacing:0px;">Announcing our <span style="color:#2b7bb9">@MicrosoftTeams</span></div>
<div class="t" style="left:1839.5px;top:1296.5px;font-size:24px;line-height:24px;font-weight:400;color:#292f33;letter-spacing:0px;">integration.</div>
<div class="t" style="left:1839.5px;top:1368.2px;font-size:24px;line-height:24px;font-weight:400;color:#292f33;letter-spacing:0px;">You can now receive all of our monitoring</div>
<div class="t" style="left:1839.5px;top:1404.1px;font-size:24px;line-height:24px;font-weight:400;color:#292f33;letter-spacing:0px;">alerts and notifications in your Microsoft</div>
<div class="t" style="left:1839.5px;top:1439.9px;font-size:24px;line-height:24px;font-weight:400;color:#292f33;letter-spacing:0px;">Teams chat.</div>
<div class="t" style="left:1839.5px;top:1511.6px;font-size:24px;line-height:24px;font-weight:400;color:#292f33;letter-spacing:0px;">Find out how to setup the integration in our</div>
<div class="t" style="left:1839.5px;top:1547.5px;font-size:24px;line-height:24px;font-weight:400;color:#292f33;letter-spacing:0px;">documentation:</div>
<div class="t" style="left:1839.5px;top:1583.3px;font-size:24px;line-height:24px;font-weight:400;color:#292f33;letter-spacing:0px;"><span style="color:#2b7bb9">docs.hetrixtools.com/microsoft-team…</span></div>
<div style="position:absolute;left:1840px;top:1676px;width:477px;height:300px;border:1px solid #fafafa;border-radius:12px;background:#fff;"></div>
<svg style="position:absolute;left:1868px;top:1715px" width="95" height="92" viewBox="0 0 95 92">
<circle cx="61.1" cy="26.1" r="7.9" fill="#5558af"/>
<circle cx="82" cy="30.5" r="7.9" fill="#5558af"/>
<path d="M57.7 39.8 L71.1 39.8 L71.1 64 Q71.1 75.3 60 75.3 L57.7 75.3 Z" fill="#5558af"/>
<path d="M74.8 44.2 L89.2 44.2 L89.2 58 Q89.2 68.8 78.5 68.8 L74.8 68.8 Z" fill="#5558af"/>
<path d="M54.3 2.9 L54.3 89.7 L3.3 80.8 L3.3 11.4 Z" fill="#5558af" stroke="#fff" stroke-width="0"/>
<rect x="54.3" y="0" width="3.4" height="92" fill="#fff"/>
<path d="M16.6 30.5 L40.9 29.1 L40.9 36.3 L32 36.3 L32 62.3 L25.5 62.3 L25.5 36.3 L16.6 36.3 Z" fill="#fff"/>
</svg>
<div class="t" style="left:1986.0px;top:1743.1px;font-size:42px;line-height:42px;font-weight:400;color:#6466b6;letter-spacing:0px;">Microsoft Teams</div>
</body></html>
